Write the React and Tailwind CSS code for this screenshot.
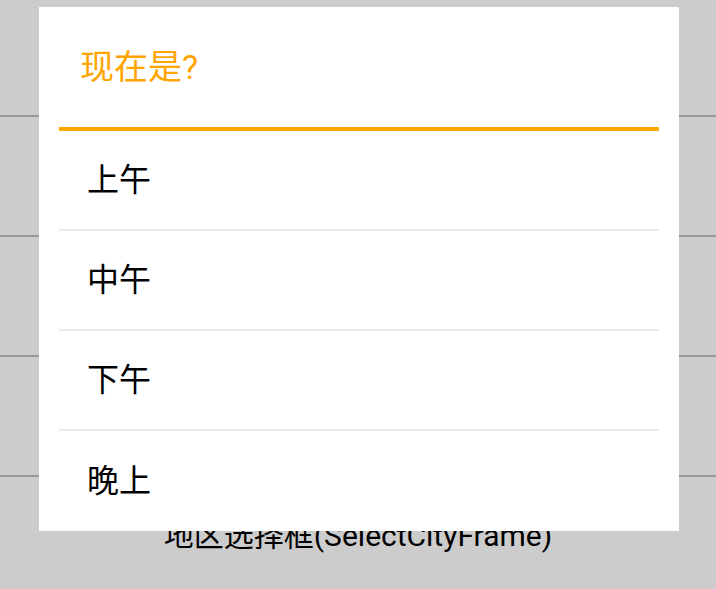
export default function App() {
  const options = ["上午", "中午", "下午", "晚上"];

  return (
    <div
      className="relative w-[716px] h-[589px] overflow-hidden bg-[#cccccc]"
      style={{ fontFamily: 'Roboto, "Noto Sans CJK SC", sans-serif' }}
    >
      {/* list behind the dialog */}
      <div className="flex flex-col">
        <div className="h-[117px] border-b-2 border-[#999999]" />
        <div className="h-[120px] border-b-2 border-[#999999]" />
        <div className="h-[120px] border-b-2 border-[#999999]" />
        <div className="h-[120px] border-b-2 border-[#999999]" />
        <div className="h-[116px] flex items-center justify-center text-[30px] text-black">
          地区选择框(SelectCityFrame)
        </div>
      </div>

      {/* dialog */}
      <div className="absolute left-[39px] top-[7px] w-[640px] h-[524px] bg-white flex flex-col">
        <div className="h-[120px] flex items-center pl-[41px] text-[34px] text-[#ffa500]">
          现在是?
        </div>
        <div className="mx-[20px] h-[4px] bg-[#ffa500]" />
        <div className="mx-[20px] flex flex-col">
          {options.map((opt, i) => (
            <div
              key={opt}
              className={
                i < options.length - 1
                  ? "h-[100px] flex items-center pl-[28px] text-[32px] text-black border-b-2 border-[#ebebeb]"
                  : "h-[100px] flex items-center pl-[28px] text-[32px] text-black"
              }
            >
              {opt}
            </div>
          ))}
        </div>
      </div>
    </div>
  );
}
